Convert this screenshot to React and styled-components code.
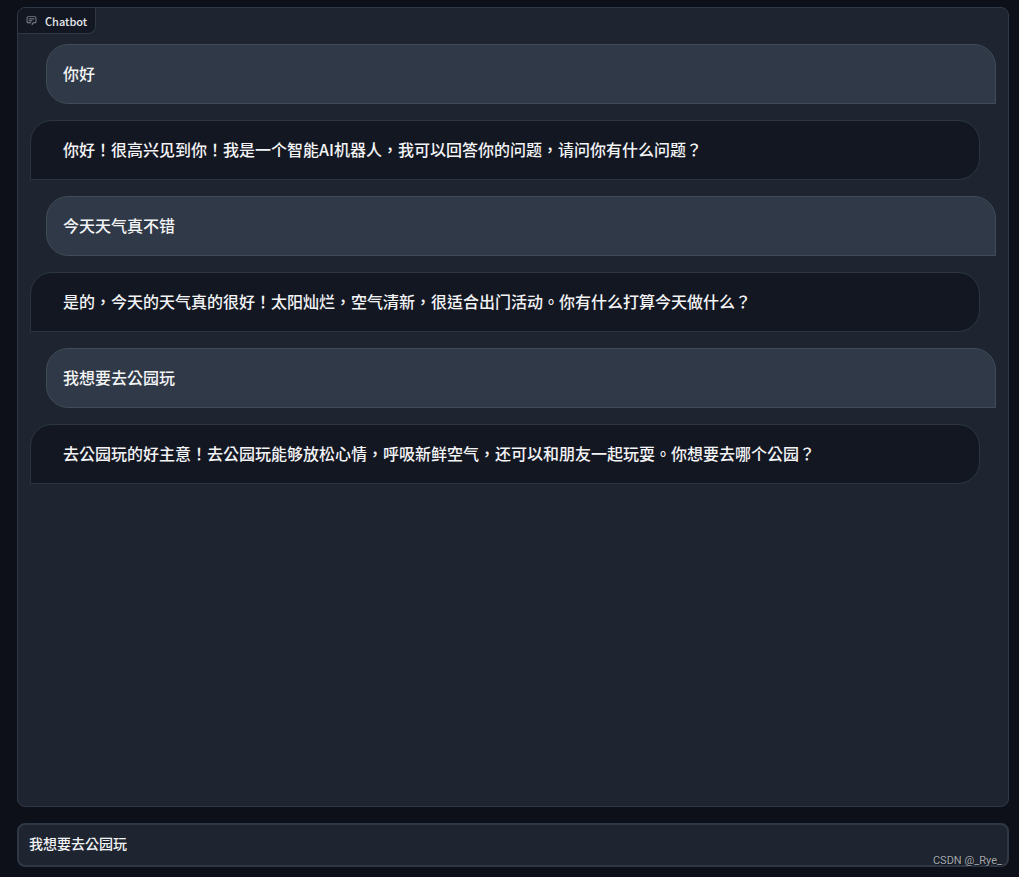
import React, { useState } from 'react';
import styled, { createGlobalStyle } from 'styled-components'

const GlobalStyle = createGlobalStyle`
* {
  box-sizing: border-box;
}
body {
  margin: 0;
  background: #0d1018;
  color: #f3f4f6;
  font-family: "Noto Sans CJK TC", sans-serif;
}
`

const Page = styled.main`
display: flex;
flex-direction: column;
gap: 16px;
min-height: 100vh;
padding: 7px 10px 10px 17px;
`

const ChatPanel = styled.section`
display: flex;
flex-direction: column;
align-items: flex-start;
flex: 1;
overflow: hidden;
background: #1e2530;
border: 1px solid #2e3846;
border-radius: 8px;
`

const PanelLabel = styled.h2`
display: flex;
align-items: center;
gap: 8px;
height: 26px;
margin: 0;
padding: 0 8px;
background: #131722;
border: solid #2e3846;
border-width: 0 1px 1px 0;
border-radius: 0 0 8px 0;
color: #e5e7eb;
font-size: 11px;
font-weight: 500;
line-height: 16px;

svg {
  width: 11px;
  height: 11px;
  color: #a9afba;
}
`

const MessageList = styled.div`
display: flex;
flex-direction: column;
gap: 16px;
width: 100%;
padding: 10px 12px;
`

const Message = styled.p`
margin: 0;
padding: 16px 16px 18px;
border: 1px solid;
border-radius: 22px;
font-size: 16px;
font-weight: 500;
line-height: 24px;
`

const UserMessage = styled(Message)`
margin-left: 16px;
background: #303947;
border-color: #3f4b57;
border-bottom-right-radius: 0;
`

const BotMessage = styled(Message)`
margin-right: 16px;
padding-left: 32px;
background: #131722;
border-color: #2b3642;
border-bottom-left-radius: 0;
`

const PromptInput = styled.input`
width: 100%;
height: 44px;
padding: 0 10px 4px;
background: #1e2530;
border: 2px solid #2e3846;
border-radius: 8px;
outline: none;
color: #f3f4f6;
font-family: inherit;
font-size: 14px;
font-weight: 500;
`

const Watermark = styled.span`
position: absolute;
right: 17px;
bottom: 8px;
color: #a3a6ab;
font-family: Roboto, sans-serif;
font-size: 11px;
line-height: 16px;
text-shadow: 1px 1px 1px #0d1018;
`

const messages = [
    { from: 'user', text: '你好' },
    { from: 'bot', text: '你好！很高兴见到你！我是一个智能AI机器人，我可以回答你的问题，请问你有什么问题？' },
    { from: 'user', text: '今天天气真不错' },
    { from: 'bot', text: '是的，今天的天气真的很好！太阳灿烂，空气清新，很适合出门活动。你有什么打算今天做什么？' },
    { from: 'user', text: '我想要去公园玩' },
    { from: 'bot', text: '去公园玩的好主意！去公园玩能够放松心情，呼吸新鲜空气，还可以和朋友一起玩耍。你想要去哪个公园？' },
]

function ChatIcon(){
    return (
        <svg viewBox="0 0 32 32" fill="currentColor" aria-hidden="true">
            <path d="M17.74 30L16 29l4-7h6a2 2 0 0 0 2-2V8a2 2 0 0 0-2-2H6a2 2 0 0 0-2 2v12a2 2 0 0 0 2 2h9v2H6a4 4 0 0 1-4-4V8a4 4 0 0 1 4-4h20a4 4 0 0 1 4 4v12a4 4 0 0 1-4 4h-4.84Z" />
            <path d="M8 10h16v2H8zm0 6h10v2H8z" />
        </svg>
    )
}

function App(){
    const [prompt, setPrompt] = useState('我想要去公园玩')

    return (
        <>
            <GlobalStyle />
            <Page>
                <ChatPanel>
                    <PanelLabel><ChatIcon />Chatbot</PanelLabel>
                    <MessageList>
                        {messages.map((message, i) => {
                            const Bubble = message.from === 'user' ? UserMessage : BotMessage
                            return <Bubble key={i}>{message.text}</Bubble>
                        })}
                    </MessageList>
                </ChatPanel>
                <PromptInput
                    type="text"
                    aria-label="Message"
                    value={prompt}
                    onChange={e => setPrompt(e.target.value)}
                />
            </Page>
            <Watermark>CSDN @_Rye_</Watermark>
        </>
    )
}

export default App
